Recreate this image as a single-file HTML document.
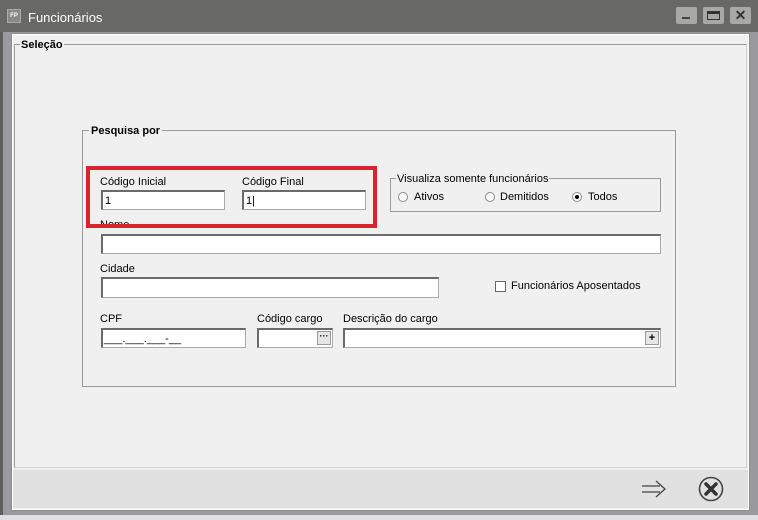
<!DOCTYPE html>
<html><head><style>
*{margin:0;padding:0;box-sizing:border-box}
body{width:758px;height:520px;overflow:hidden;background:#9a999e;font-family:"Liberation Sans",sans-serif;font-size:11px;color:#000;position:relative}
.a{position:absolute}
.lbl{position:absolute;font-size:11px;white-space:nowrap}
.inp{position:absolute;background:#fff;border:1px solid #aaa;border-top:2px solid #6a6a6a;border-left:2px solid #6a6a6a}
.rad{position:absolute;width:10px;height:10px;border-radius:50%;background:#fff;border:1px solid #888}
</style></head><body>
<div class="a" style="left:0;top:0;width:758px;height:32px;background:#686866"></div>
<div class="a" style="left:0;top:32px;width:3px;height:488px;background:#5e5e5e"></div>
<div class="a" style="left:7px;top:9px;width:14px;height:14px;background:#8a8a8a;border:1px solid #aaa;color:#fff;font-size:6px;line-height:12px;text-align:center;font-weight:bold">FP</div>
<div class="lbl" style="left:28px;top:10px;color:#fff;font-size:13px">Funcionários</div>
<div class="a" style="left:676px;top:7px;width:21px;height:17px;background:#a8a8a6;border-radius:2px"><div class="a" style="left:6px;top:10px;width:8px;height:2px;background:#444"></div></div>
<div class="a" style="left:703px;top:7px;width:21px;height:17px;background:#a8a8a6;border-radius:2px"><div class="a" style="left:4px;top:4px;width:13px;height:9px;border:1px solid #333;border-top:3px solid #333"></div></div>
<div class="a" style="left:730px;top:7px;width:21px;height:17px;background:#a8a8a6;border-radius:2px;color:#333;font-weight:bold;font-size:14px;line-height:17px;text-align:center">✕</div>
<div class="a" style="left:12px;top:34px;width:737px;height:476px;background:#f0f0f0;border:1px solid #fff;outline:1px solid #8e8e8e"></div>
<div class="a" style="left:13px;top:470px;width:735px;height:38px;background:#e1e1e1"></div>
<div class="a" style="left:0;top:515px;width:758px;height:5px;background:#e0e0e0"></div>
<div class="a" style="left:14px;top:44px;width:733px;height:424px;border:1px solid #d0d0d0;border-top:1px solid #999;border-left:1px solid #999"></div>
<div class="lbl" style="left:20px;top:39px;font-weight:bold;background:#f0f0f0;padding:0 1px">Seleção</div>
<div class="a" style="left:82px;top:130px;width:594px;height:257px;border:1px solid #999"></div>
<div class="lbl" style="left:89px;top:125px;font-weight:bold;background:#f0f0f0;padding:0 2px">Pesquisa por</div>
<div class="lbl" style="left:100px;top:219px;">Nome</div>
<div class="a" style="left:86px;top:166px;width:291px;height:62px;border:4px solid #d9232e"></div>
<div class="lbl" style="left:100px;top:176px">Código Inicial</div>
<div class="inp" style="left:101px;top:190px;width:124px;height:20px"><span class="a" style="left:2px;top:3px">1</span></div>
<div class="lbl" style="left:242px;top:176px">Código Final</div>
<div class="inp" style="left:242px;top:190px;width:124px;height:20px"><span class="a" style="left:2px;top:3px">1|</span></div>
<div class="a" style="left:390px;top:178px;width:271px;height:34px;border:1px solid #999"></div>
<div class="lbl" style="left:396px;top:173px;background:#f0f0f0;padding:0 1px">Visualiza somente funcionários</div>
<div class="rad" style="left:398px;top:192px"></div><div class="lbl" style="left:414px;top:191px">Ativos</div>
<div class="rad" style="left:485px;top:192px"></div><div class="lbl" style="left:500px;top:191px">Demitidos</div>
<div class="rad" style="left:572px;top:192px"><div class="a" style="left:2px;top:2px;width:4px;height:4px;border-radius:50%;background:#000"></div></div><div class="lbl" style="left:588px;top:191px">Todos</div>
<div class="inp" style="left:101px;top:234px;width:560px;height:20px"></div>
<div class="lbl" style="left:100px;top:263px">Cidade</div>
<div class="inp" style="left:101px;top:277px;width:338px;height:21px"></div>
<div class="a" style="left:495px;top:281px;width:11px;height:11px;border:1px solid #666;background:#fff"></div>
<div class="lbl" style="left:511px;top:280px">Funcionários Aposentados</div>
<div class="lbl" style="left:100px;top:313px">CPF</div>
<div class="inp" style="left:101px;top:328px;width:145px;height:20px"><span class="a" style="left:1px;top:3px;font-size:11px">___.___.___-__</span></div>
<div class="lbl" style="left:257px;top:313px">Código cargo</div>
<div class="inp" style="left:257px;top:328px;width:76px;height:20px"><div class="a" style="right:1px;top:1px;width:14px;height:14px;background:#e6e6e6;border:1px solid #999;font-size:9px;line-height:8px;text-align:center;font-weight:bold">···</div></div>
<div class="lbl" style="left:343px;top:313px">Descrição do cargo</div>
<div class="inp" style="left:343px;top:328px;width:318px;height:20px"><div class="a" style="right:1px;top:1px;width:14px;height:14px;background:#e6e6e6;border:1px solid #999;font-size:11px;line-height:12px;text-align:center;font-weight:bold">+</div></div>
<svg class="a" style="left:640px;top:478px" width="28" height="22" viewBox="0 0 28 22"><path d="M2 8H20M2 14H20M16 3L25 11L16 19" fill="none" stroke="#444" stroke-width="1.3"/></svg>
<svg class="a" style="left:697px;top:475px" width="28" height="28" viewBox="0 0 28 28"><circle cx="14" cy="14" r="11.5" fill="none" stroke="#444" stroke-width="1.6"/><path d="M9 9L19 19M19 9L9 19" stroke="#333" stroke-width="3.5" stroke-linecap="round"/></svg>
</body></html>
